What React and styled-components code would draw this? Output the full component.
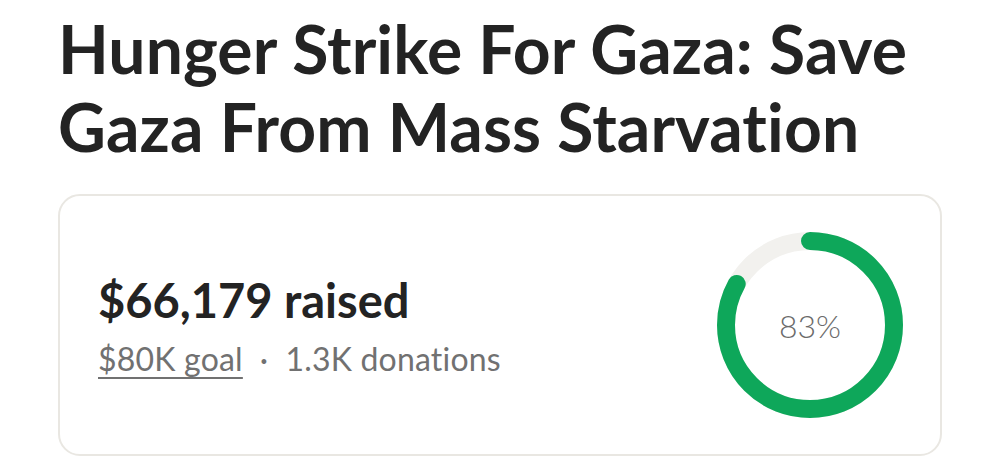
import React from 'react';
import styled, { createGlobalStyle } from 'styled-components';

const GlobalStyle = createGlobalStyle`
    body {
        margin: 0;
        background: #ffffff;
        font-family: Lato, "Noto Sans", sans-serif;
    }
`

const Page = styled.main`
    width: 1000px;
    padding: 10px 58px 0 58px;
    box-sizing: border-box;
`

const Title = styled.h1`
    margin: 0 0 28px 0;
    color: #232323;
    font-size: 66px;
    font-weight: 700;
    line-height: 78px;
    letter-spacing: 0.1px;
`

const Card = styled.section`
    width: 884px;
    height: 262px;
    box-sizing: border-box;
    padding: 0 37px 0 38px;
    display: flex;
    align-items: center;
    justify-content: space-between;

    border: 2px solid #e9e7e2;
    border-radius: 22px;
`

const Stats = styled.div`
    display: flex;
    flex-direction: column;
    gap: 14px;
    margin-top: 2px;
`

const Raised = styled.h2`
    margin: 0;
    color: #232323;
    font-size: 47px;
    font-weight: 700;
    line-height: 52px;
`

const Meta = styled.p`
    margin: 0;
    color: #717171;
    font-size: 32px;
    font-weight: 400;
    line-height: 38px;
    letter-spacing: 0.2px;
`

const GoalLink = styled.a`
    color: inherit;
    text-decoration: underline;
    text-decoration-thickness: 2px;
    text-underline-offset: 6px;
`

const Dot = styled.span`
    margin: 0 17px;
`

const RingWrap = styled.div`
    position: relative;
    width: 186px;
    height: 186px;
`

const RingLabel = styled.span`
    position: absolute;
    inset: 0;
    display: flex;
    align-items: center;
    justify-content: center;
    color: #6b6b6b;
    font-size: 32px;
    font-weight: 300;
`

const ProgressRing = ({ percent }) => {
    const size = 186
    const stroke = 18
    const r = (size - stroke) / 2
    const c = 2 * Math.PI * r
    return (
        <RingWrap>
            <svg width={size} height={size} viewBox={`0 0 ${size} ${size}`}>
                <circle cx={size / 2} cy={size / 2} r={r} fill="none" stroke="#f2f1ee" strokeWidth={stroke} />
                <circle
                    cx={size / 2}
                    cy={size / 2}
                    r={r}
                    fill="none"
                    stroke="#0ea75a"
                    strokeWidth={stroke}
                    strokeLinecap="round"
                    strokeDasharray={`${c * percent / 100} ${c}`}
                    transform={`rotate(-90 ${size / 2} ${size / 2})`}
                />
            </svg>
            <RingLabel>{percent}%</RingLabel>
        </RingWrap>
    )
}

export default function App() {
    return (
        <>
            <GlobalStyle />
            <Page>
                <Title>Hunger Strike For Gaza: Save Gaza From Mass Starvation</Title>
                <Card>
                    <Stats>
                        <Raised>$66,179 raised</Raised>
                        <Meta>
                            <GoalLink href="#">$80K goal</GoalLink>
                            <Dot>·</Dot>
                            1.3K donations
                        </Meta>
                    </Stats>
                    <ProgressRing percent={83} />
                </Card>
            </Page>
        </>
    )
}
